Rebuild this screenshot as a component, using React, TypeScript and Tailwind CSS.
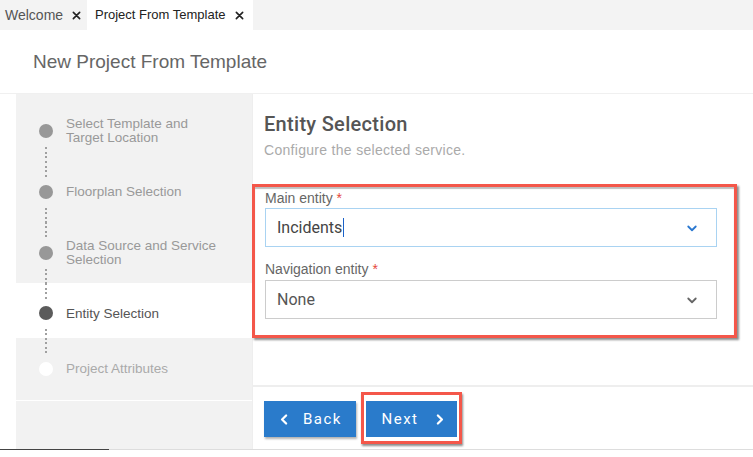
import React from "react";

const Chevron = ({ dir, color, size = 12, sw = 2.4 }: { dir: "down" | "left" | "right"; color: string; size?: number; sw?: number }) => {
  const d = dir === "down" ? "M3 6 L8 11 L13 6" : dir === "left" ? "M10 3 L5 8 L10 13" : "M6 3 L11 8 L6 13";
  return (
    <svg width={size} height={size} viewBox="0 0 16 16" fill="none">
      <path d={d} stroke={color} strokeWidth={sw} strokeLinecap="round" strokeLinejoin="round" />
    </svg>
  );
};

const Close = () => (
  <svg width="9" height="9" viewBox="0 0 10 10" fill="none">
    <path d="M1.5 1.5 L8.5 8.5 M8.5 1.5 L1.5 8.5" stroke="#222" strokeWidth="1.8" strokeLinecap="round" />
  </svg>
);

const Dots = ({ show, cls }: { show: boolean; cls: string }) => (
  <div
    className={
      "w-[2px] " + cls + " " +
      (show ? "bg-[repeating-linear-gradient(to_bottom,#a0a0a0_0_2px,transparent_2px_4.5px)]" : "")
    }
  />
);

type Step = { label: string[]; state: "done" | "active" | "todo"; h: string; top: string; bot: string; tp: string };

const steps: Step[] = [
  { label: ["Select Template and", "Target Location"], state: "done", h: "h-[61px]", top: "flex-1", bot: "flex-1", tp: "" },
  { label: ["Floorplan Selection"], state: "done", h: "h-[61px]", top: "flex-1", bot: "flex-1", tp: "" },
  { label: ["Data Source and Service", "Selection"], state: "done", h: "h-[61px]", top: "flex-1", bot: "flex-1", tp: "" },
  { label: ["Entity Selection"], state: "active", h: "h-[55px]", top: "flex-[23_1_0%]", bot: "flex-[18_1_0%]", tp: "pt-[6px]" },
  { label: ["Project Attributes"], state: "todo", h: "h-[62px]", top: "flex-1", bot: "flex-1", tp: "" },
];

export default function App() {
  return (
    <div className="w-[753px] h-[457px] bg-white overflow-hidden flex flex-col font-['Liberation_Sans',Arial,sans-serif]">
      {/* Tabs */}
      <div className="h-[30px] bg-[#f3f3f3] flex shrink-0">
        <div className="w-[87px] flex items-center pl-[5px] text-[14px] text-[#555] whitespace-nowrap">
          <span>Welcome</span>
          <span className="ml-[9px] flex items-center"><Close /></span>
        </div>
        <div className="flex items-center bg-white w-[166px] pl-[8px] text-[13px] text-[#222] whitespace-nowrap">
          <span>Project From Template</span>
          <span className="ml-[9px] flex items-center"><Close /></span>
        </div>
      </div>

      {/* Header */}
      <div className="h-[63px] shrink-0 flex items-center pl-[33px] pt-[2px] text-[19px] text-[#666]">
        New Project From Template
      </div>

      {/* Body */}
      <div className="h-[356px] shrink-0 flex border-t border-[#f0f0f0]">
        <div className="w-[16px]" />
        {/* Sidebar */}
        <div className="w-[236px] bg-[#f2f2f2] flex flex-col pt-[6px]">
          {steps.map((s, i) => (
            <div key={i} className={"flex " + s.h + " " + (s.state === "active" ? "bg-white" : "")}>
              <div className="w-[60px] flex flex-col items-center">
                <div className={s.top + " flex flex-col items-center"}>
                  <Dots show={i !== 0} cls="flex-1 mb-[7px]" />
                </div>
                <div
                  className={
                    "w-[14px] h-[14px] rounded-full shrink-0 " +
                    (s.state === "done" ? "bg-[#989898]" : s.state === "active" ? "bg-[#5b5b5b]" : "bg-white")
                  }
                />
                <div className={s.bot + " flex flex-col items-center"}>
                  <Dots show={i !== steps.length - 1} cls="flex-1 mt-[9px]" />
                </div>
              </div>
              <div
                className={
                  "flex flex-col justify-center text-[13.5px] leading-[13.5px] -ml-[10px] " + s.tp + " " +
                  (s.state === "active" ? "text-[#555]" : s.state === "done" ? "text-[#999]" : "text-[#aaa]")
                }
              >
                {s.label.map((l, j) => (
                  <div key={j}>{l}</div>
                ))}
              </div>
            </div>
          ))}
          <div className="h-px bg-white" />
        </div>

        {/* Right panel */}
        <div className="flex-1 flex flex-col border-l border-[#eeeeee]">
          <div className="flex-1 flex flex-col pl-[11px]">
            <div className="pt-[19px] font-['Roboto',sans-serif] font-medium text-[20px] tracking-[0.3px] leading-[22px] text-[#555]">Entity Selection</div>
            <div className="mt-[7px] text-[14px] tracking-[0.3px] leading-[16px] text-[#aaa]">Configure the selected service.</div>
            <div className="mt-[26px] -ml-[12px] w-[485px] h-[154px] border-[3px] border-[#f4574a] shadow-[2px_2px_2px_rgba(0,0,0,0.45),inset_0_2px_1px_rgba(0,0,0,0.25)] pl-[10px] pt-[3px] bg-white">
              <div className="text-[14px] leading-[16px] text-[#666]">
                Main entity <span className="text-[#e5483b]">*</span>
              </div>
              <div className="mt-[2px] w-[452px] h-[39px] border border-[#a9d3f2] flex items-center pl-[11px] pr-[18px] font-['Roboto',sans-serif] text-[16px] text-[#444]">
                <span>Incidents</span>
                <span className="w-px h-[19px] bg-[#1a62c9] ml-px" />
                <span className="flex-1" />
                <Chevron dir="down" color="#2a78d0" />
              </div>
              <div className="mt-[14px] text-[14px] leading-[16px] text-[#666]">
                Navigation entity <span className="text-[#e5483b]">*</span>
              </div>
              <div className="mt-[3px] w-[452px] h-[39px] border border-[#cccccc] flex items-center pl-[11px] pr-[18px] font-['Roboto',sans-serif] text-[16px] text-[#555]">
                <span>None</span>
                <span className="flex-1" />
                <Chevron dir="down" color="#666" />
              </div>
            </div>
          </div>
          <div className="h-[64px] shrink-0 border-t-2 border-[#eeeeee] flex items-start pl-[11px] pt-[14px]">
            <button className="w-[92px] h-[36px] bg-[#2a7bcb] text-white flex items-center justify-center gap-[12px] font-['Roboto',sans-serif] text-[15px] tracking-[1.5px] shadow-[1px_2px_2px_rgba(0,0,0,0.3)]">
              <Chevron dir="left" color="#fff" size={13} sw={2.8} />
              <span>Back</span>
            </button>
            <div className="ml-[5px] -mt-[9px] border-[3px] border-[#f4574a] pt-[6px] pb-[4px] px-[2px] shadow-[1px_2px_2px_rgba(0,0,0,0.45)]">
              <button className="w-[91px] h-[36px] bg-[#2a7bcb] text-white flex items-center justify-center gap-[14px] pl-[4px] font-['Roboto',sans-serif] text-[15px] tracking-[1.5px]">
                <span>Next</span>
                <Chevron dir="right" color="#fff" size={13} sw={2.8} />
              </button>
            </div>
          </div>
        </div>
      </div>

      {/* Bottom line */}
      <div className="h-px shrink-0 flex">
        <div className="w-[109px] bg-[#444]" />
        <div className="flex-1 bg-[#dddddd]" />
      </div>
    </div>
  );
}
